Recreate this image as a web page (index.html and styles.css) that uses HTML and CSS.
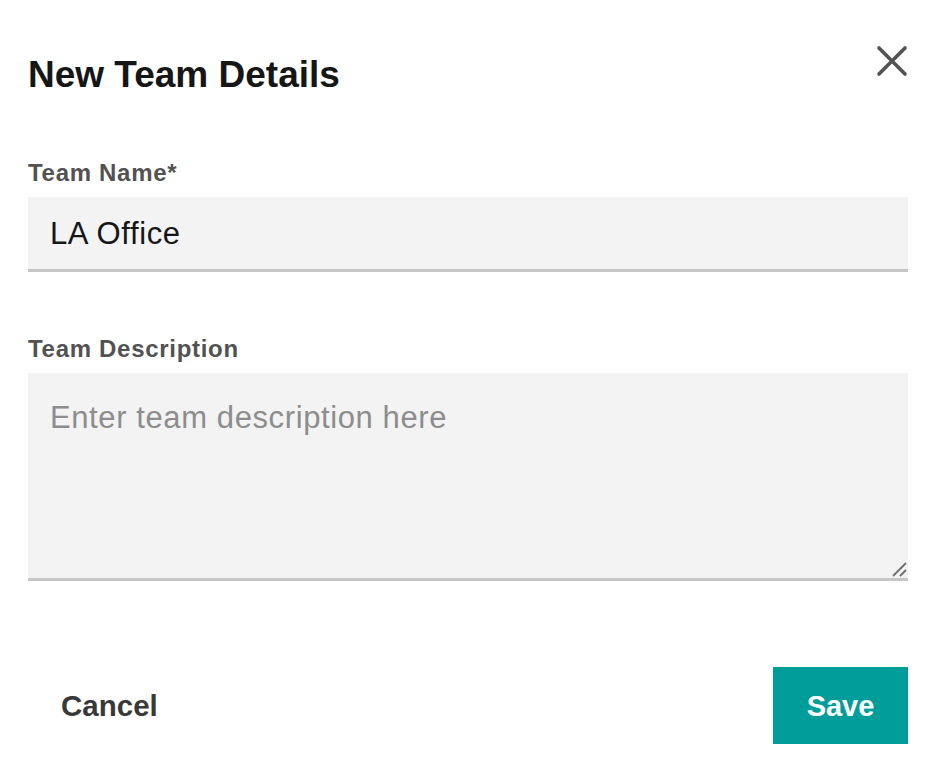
FILE: index.html
```html
<!DOCTYPE html>
<html lang="en">
<head>
    <meta charset="UTF-8">
    <title>New Team Details</title>
    <link rel="stylesheet" href="styles.css">
</head>
<body>
    <div class="modal">
        <div class="modal-header">
            <h1 class="modal-title">New Team Details</h1>
            <button class="close-btn" aria-label="Close">
                <svg width="32" height="32" viewBox="0 0 32 32">
                    <path d="M3 3 L29 29 M29 3 L3 29" stroke="#525252" stroke-width="3.6" stroke-linecap="round" fill="none"/>
                </svg>
            </button>
        </div>

        <div class="field">
            <label class="field-label" for="team-name">Team Name*</label>
            <input class="text-input" id="team-name" type="text" value="LA Office">
        </div>

        <div class="field field-desc">
            <label class="field-label" for="team-desc">Team Description</label>
            <div class="area-wrap">
                <textarea class="text-area" id="team-desc" placeholder="Enter team description here"></textarea>
                <svg class="grip" width="16" height="16" viewBox="0 0 16 16">
                    <path d="M2 15 L15 2 M9 15 L15 9" stroke="#6f6f6f" stroke-width="1.8" fill="none"/>
                </svg>
            </div>
        </div>

        <div class="modal-footer">
            <button class="btn-ghost">Cancel</button>
            <button class="btn-primary">Save</button>
        </div>
    </div>
</body>
</html>
```

FILE: styles.css
```css
body {
    margin: 0;
    font-family: "Liberation Sans", Arial, Helvetica, sans-serif;
    background-color: #ffffff;
    color: #161616;
}

.modal {
    padding: 53px 34px 0 28px;
}

.modal-header {
    display: flex;
    justify-content: space-between;
    align-items: flex-start;
}

.modal-title {
    margin: 0;
    font-size: 37px;
    line-height: 44px;
    font-weight: bold;
    color: #161616;
}

.close-btn {
    margin-top: -8px;
    padding: 0;
    border: none;
    background: none;
    width: 32px;
    height: 32px;
    cursor: pointer;
}

.close-btn svg {
    display: block;
}

.field {
    display: flex;
    flex-direction: column;
    margin-top: 62px;
}

.field-desc {
    margin-top: 63px;
}

.field-label {
    font-size: 24px;
    line-height: 28px;
    font-weight: bold;
    letter-spacing: 0.7px;
    color: #525252;
    margin-bottom: 10px;
}

.text-input,
.text-area {
    font-family: "Liberation Sans", Arial, Helvetica, sans-serif;
    font-size: 31px;
    line-height: 36px;
    letter-spacing: 0.6px;
    color: #161616;
    background-color: #f3f3f3;
    border: none;
    border-bottom: 3px solid #c6c6c6;
    outline: none;
    box-sizing: border-box;
    width: 100%;
    margin: 0;
    padding-left: 22px;
    padding-right: 22px;
}

.text-input {
    height: 75px;
    padding-top: 19px;
    padding-bottom: 17px;
}

.area-wrap {
    position: relative;
}

.text-area {
    display: block;
    height: 208px;
    padding-top: 27px;
    padding-bottom: 10px;
    resize: none;
}

.text-area::placeholder {
    color: #8d8d8d;
}

.grip {
    position: absolute;
    right: 1px;
    bottom: 4px;
}

.modal-footer {
    display: flex;
    justify-content: space-between;
    align-items: center;
    margin-top: 86px;
}

.btn-ghost {
    font-family: "Liberation Sans", Arial, Helvetica, sans-serif;
    font-size: 29.5px;
    line-height: 34px;
    font-weight: bold;
    color: #393939;
    background: none;
    border: none;
    padding: 0 0 0 33px;
    cursor: pointer;
}

.btn-primary {
    font-family: "Liberation Sans", Arial, Helvetica, sans-serif;
    font-size: 29px;
    line-height: 34px;
    font-weight: bold;
    color: #ffffff;
    background-color: #009d9a;
    border: none;
    height: 77px;
    width: 135px;
    padding: 0;
    cursor: pointer;
}
```
